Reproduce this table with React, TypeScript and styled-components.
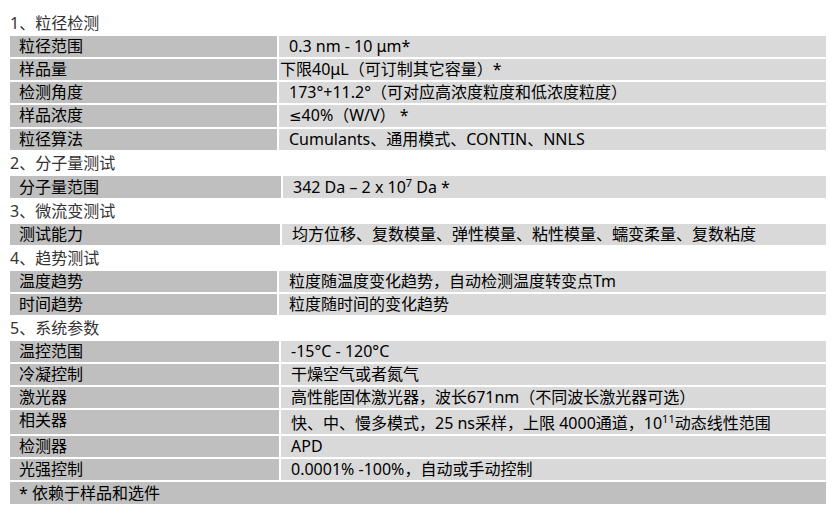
import React from 'react';
import styled, { createGlobalStyle } from 'styled-components';

const GlobalStyle = createGlobalStyle`
  html, body {
    margin: 0;
    padding: 0;
    background: #ffffff;
  }
  body {
    font-family: "Noto Sans", "Noto Sans CJK SC", sans-serif;
    font-size: 16px;
    color: #000000;
  }
`;

type Row = {
    label: string;
    value: React.ReactNode;
    flush?: boolean;
    // extra height (px) some rows get from their superscript
    lift?: number;
};

type Section = {
    title: string;
    labelWidth: number;
    rows: Row[];
};

const Sup = styled.sup`
  font-size: 11px;
  line-height: 11px;
  vertical-align: 6px;
`;

const Symbol = styled.span`
  font-family: "DejaVu Sans", sans-serif;
  font-size: 15px;
`;

const sections: Section[] = [
    {
        title: '1、粒径检测',
        labelWidth: 267,
        rows: [
            { label: '粒径范围', value: '0.3 nm - 10 μm*' },
            { label: '样品量', value: '下限40μL（可订制其它容量）*', flush: true },
            { label: '检测角度', value: '173°+11.2°（可对应高浓度粒度和低浓度粒度）' },
            { label: '样品浓度', value: <><Symbol>≤</Symbol>40%（W/V） *</> },
            { label: '粒径算法', value: 'Cumulants、通用模式、CONTIN、NNLS' },
        ],
    },
    {
        title: '2、分子量测试',
        labelWidth: 271,
        rows: [
            { label: '分子量范围', value: <>342 Da – 2 x 10<Sup>7</Sup> Da *</>, lift: 1 },
        ],
    },
    {
        title: '3、微流变测试',
        labelWidth: 270,
        rows: [
            { label: '测试能力', value: '均方位移、复数模量、弹性模量、粘性模量、蠕变柔量、复数粘度' },
        ],
    },
    {
        title: '4、趋势测试',
        labelWidth: 267,
        rows: [
            { label: '温度趋势', value: '粒度随温度变化趋势，自动检测温度转变点Tm' },
            { label: '时间趋势', value: '粒度随时间的变化趋势' },
        ],
    },
    {
        title: '5、系统参数',
        labelWidth: 269,
        rows: [
            { label: '温控范围', value: '-15°C - 120°C' },
            { label: '冷凝控制', value: '干燥空气或者氮气' },
            { label: '激光器', value: '高性能固体激光器，波长671nm（不同波长激光器可选）' },
            { label: '相关器', value: <>快、中、慢多模式，25 ns采样，上限 4000通道，10<Sup>11</Sup>动态线性范围</>, lift: 3 },
            { label: '检测器', value: 'APD' },
            { label: '光强控制', value: '0.0001% -100%，自动或手动控制' },
        ],
    },
];

const Page = styled.div`
  width: 816px;
  padding: 12px 0 0 10px;
  display: flex;
  flex-direction: column;
  gap: 2px;
`;

const Heading = styled.div`
  height: 22px;
  line-height: 22px;
  color: #333333;
  white-space: nowrap;
`;

const TableRow = styled.div<{ $labelWidth: number }>`
  display: grid;
  grid-template-columns: ${(p) => p.$labelWidth}px 1fr;
  column-gap: 2px;
  min-height: 21px;
`;

const LabelCell = styled.div<{ $lift: number }>`
  background: #bfbfbf;
  padding: ${(p) => (p.$lift > 2 ? 0 : p.$lift)}px 9px 0;
  line-height: 21px;
  white-space: nowrap;
`;

const ValueCell = styled.div<{ $flush?: boolean; $lift: number }>`
  background: #d9d9d9;
  padding: ${(p) => p.$lift}px ${(p) => (p.$flush ? '1px' : '10px')} 0;
  line-height: 21px;
  white-space: nowrap;
`;

const FootNote = styled.div`
  background: #bfbfbf;
  padding: 0 9px;
  height: 22px;
  line-height: 22px;
`;

export default function App() {
    return (
        <>
            <GlobalStyle />
            <Page>
                {sections.map((section) => (
                    <React.Fragment key={section.title}>
                        <Heading>{section.title}</Heading>
                        {section.rows.map((row) => (
                            <TableRow key={row.label} $labelWidth={section.labelWidth}>
                                <LabelCell $lift={row.lift ?? 0}>{row.label}</LabelCell>
                                <ValueCell $flush={row.flush} $lift={row.lift ?? 0}>{row.value}</ValueCell>
                            </TableRow>
                        ))}
                    </React.Fragment>
                ))}
                <FootNote>* 依赖于样品和选件</FootNote>
            </Page>
        </>
    );
}
